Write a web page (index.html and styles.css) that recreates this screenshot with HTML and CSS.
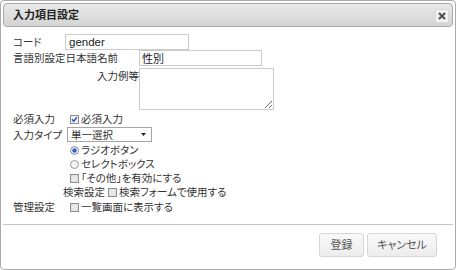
FILE: index.html
```html
<!DOCTYPE html>
<html lang="ja">
<head>
<meta charset="utf-8">
<title>入力項目設定</title>
<link rel="stylesheet" href="styles.css">
</head>
<body>
<div class="dialog">
  <div class="titlebar">
    <span class="title">入力項目設定</span>
    <span class="close"><svg width="8" height="8" viewBox="0 0 8 8"><path d="M1 1L7 7M7 1L1 7" stroke="#555" stroke-width="2.2"/></svg></span>
  </div>
  <div class="content">
    <div class="row r1"><span class="lbl">コード</span><input class="txt code" value="gender"></div>
    <div class="row r2"><span class="lbl wide">言語別設定日本語名前</span><input class="txt name" value="性別"></div>
    <div class="row r3"><span class="lbl wide right">入力例等</span><textarea class="area"></textarea></div>
    <div class="row r4"><span class="lbl">必須入力</span>
      <span class="opt first"><svg class="cb" width="9" height="9" viewBox="0 0 9 9"><rect x="0.5" y="0.5" width="8" height="8" fill="#f4f4f4" stroke="#8e8e8e"/><path d="M2 4.3L3.7 6.3L7 2.3" fill="none" stroke="#2358c9" stroke-width="1.5"/></svg>必須入力</span></div>
    <div class="row r5"><span class="lbl">入力タイプ</span>
      <div class="select"><span>単一選択</span><svg width="5" height="3" viewBox="0 0 5 3"><path d="M0 0H5L2.5 3Z" fill="#222"/></svg></div></div>
    <div class="row r6"><span class="opt indent"><svg class="cb" width="9" height="9" viewBox="0 0 9 9"><circle cx="4.5" cy="4.5" r="4" fill="#eef2f6" stroke="#8a8f96"/><circle cx="4.5" cy="4.5" r="2.2" fill="#2b64c4"/></svg>ラジオボタン</span></div>
    <div class="row r7"><span class="opt indent"><svg class="cb" width="9" height="9" viewBox="0 0 9 9"><circle cx="4.5" cy="4.5" r="4" fill="#f2f2f2" stroke="#9a9a9a"/></svg>セレクトボックス</span></div>
    <div class="row r8"><span class="opt indent"><svg class="cb" width="9" height="9" viewBox="0 0 9 9"><rect x="0.5" y="0.5" width="8" height="8" fill="#dcdcdc" stroke="#8e8e8e"/><rect x="1.5" y="1.5" width="6" height="6" fill="#e8e8e8"/></svg>「その他」を有効にする</span></div>
    <div class="row r9"><span class="sublbl">検索設定</span><span class="opt"><svg class="cb" width="9" height="9" viewBox="0 0 9 9"><rect x="0.5" y="0.5" width="8" height="8" fill="#dcdcdc" stroke="#8e8e8e"/><rect x="1.5" y="1.5" width="6" height="6" fill="#e8e8e8"/></svg>検索フォームで使用する</span></div>
    <div class="row r10"><span class="lbl">管理設定</span>
      <span class="opt first"><svg class="cb" width="9" height="9" viewBox="0 0 9 9"><rect x="0.5" y="0.5" width="8" height="8" fill="#dcdcdc" stroke="#8e8e8e"/><rect x="1.5" y="1.5" width="6" height="6" fill="#e8e8e8"/></svg>一覧画面に表示する</span></div>
  </div>
  <div class="pane">
    <button class="btn ok">登録</button>
    <button class="btn cancel">キャンセル</button>
  </div>
</div>
</body>
</html>
```
FILE: styles.css
```css
html, body {
  margin: 0;
  background: #fff;
}
body {
  font: 10.5px/14px "Liberation Sans", "Noto Sans CJK JP", sans-serif;
  font-feature-settings: "palt" 1;
  color: #333;
}
.dialog {
  width: 456px;
  height: 270px;
  box-sizing: border-box;
  border: 1px solid #aaa;
  border-radius: 4px;
  padding: 2px;
  display: flex;
  flex-direction: column;
  background: #fff;
}
.titlebar {
  height: 24px;
  flex: none;
  box-sizing: border-box;
  border: 1px solid #aaa;
  border-radius: 4px;
  background: linear-gradient(#e9e9e9, #d4d4d4);
  display: flex;
  align-items: center;
  padding: 0 3px 0 9px;
}
.title {
  flex: 1;
  font-size: 11px;
  font-weight: bold;
  color: #222;
}
.close {
  width: 14px;
  height: 14px;
  box-sizing: border-box;
  margin-top: 2px;
  border: 1px solid #dadada;
  border-radius: 2px;
  background: #f1f1f1;
  display: flex;
  align-items: center;
  justify-content: center;
}
.content {
  flex: 1;
  padding: 7px 0 0 10px;
}
.row {
  display: flex;
  align-items: center;
  height: 14px;
}
.lbl {
  width: 52px;
  flex: none;
  white-space: nowrap;
}
.lbl.wide { width: 126px; }
.lbl.right { text-align: right; }
.txt {
  box-sizing: border-box;
  height: 16px;
  margin: 0;
  border: 1px solid #cbcbcb;
  padding: 0 2px;
  font: 12px/14px "Liberation Sans", "Noto Sans CJK JP", sans-serif;
  color: #222;
  outline: none;
  background: #fff;
}
.code { width: 124px; padding-left: 3px; font-size: 11.5px; }
.name { width: 123px; font-size: 11px; }
.r1, .r2 { height: 16px; }
.r3 {
  height: 42px;
  margin-top: 2px;
  align-items: flex-start;
}
.r3 .lbl { padding-top: 1px; }
.area {
  box-sizing: border-box;
  width: 135px;
  height: 42px;
  margin: 0;
  padding: 0;
  border: 1px solid #cbcbcb;
  outline: none;
}
.r4 { margin-top: 2px; }
.r5 { height: 15px; margin-top: 1px; }
.r6 { margin-top: 1px; }
.r10 { margin-top: 1px; }
.opt {
  display: flex;
  align-items: center;
  gap: 2px;
  white-space: nowrap;
}
.opt.first { margin-left: 5px; }
.opt.indent { margin-left: 57px; }
.cb { flex: none; }
.sublbl {
  margin-left: 50px;
  margin-right: 3px;
}
.select {
  box-sizing: border-box;
  width: 85px;
  height: 15px;
  margin-left: 2px;
  border: 1px solid #a5a5a5;
  background: #fff;
  display: flex;
  align-items: center;
  justify-content: space-between;
  padding: 0 5px 0 3px;
}
.pane {
  flex: none;
  border-top: 1px solid #c4c4c4;
  padding: 8px 16px 10px 0;
  display: flex;
  justify-content: flex-end;
  gap: 3px;
}
.btn {
  height: 24px;
  margin: 0;
  padding: 0;
  border: 1px solid #d6d6d6;
  border-radius: 3px;
  background: linear-gradient(#f9f9f9, #ececec);
  color: #555;
  font: 11px/14px "Liberation Sans", "Noto Sans CJK JP", sans-serif;
  font-feature-settings: "palt" 1;
}
.btn.ok { width: 45px; }
.btn.cancel { width: 70px; }
```
